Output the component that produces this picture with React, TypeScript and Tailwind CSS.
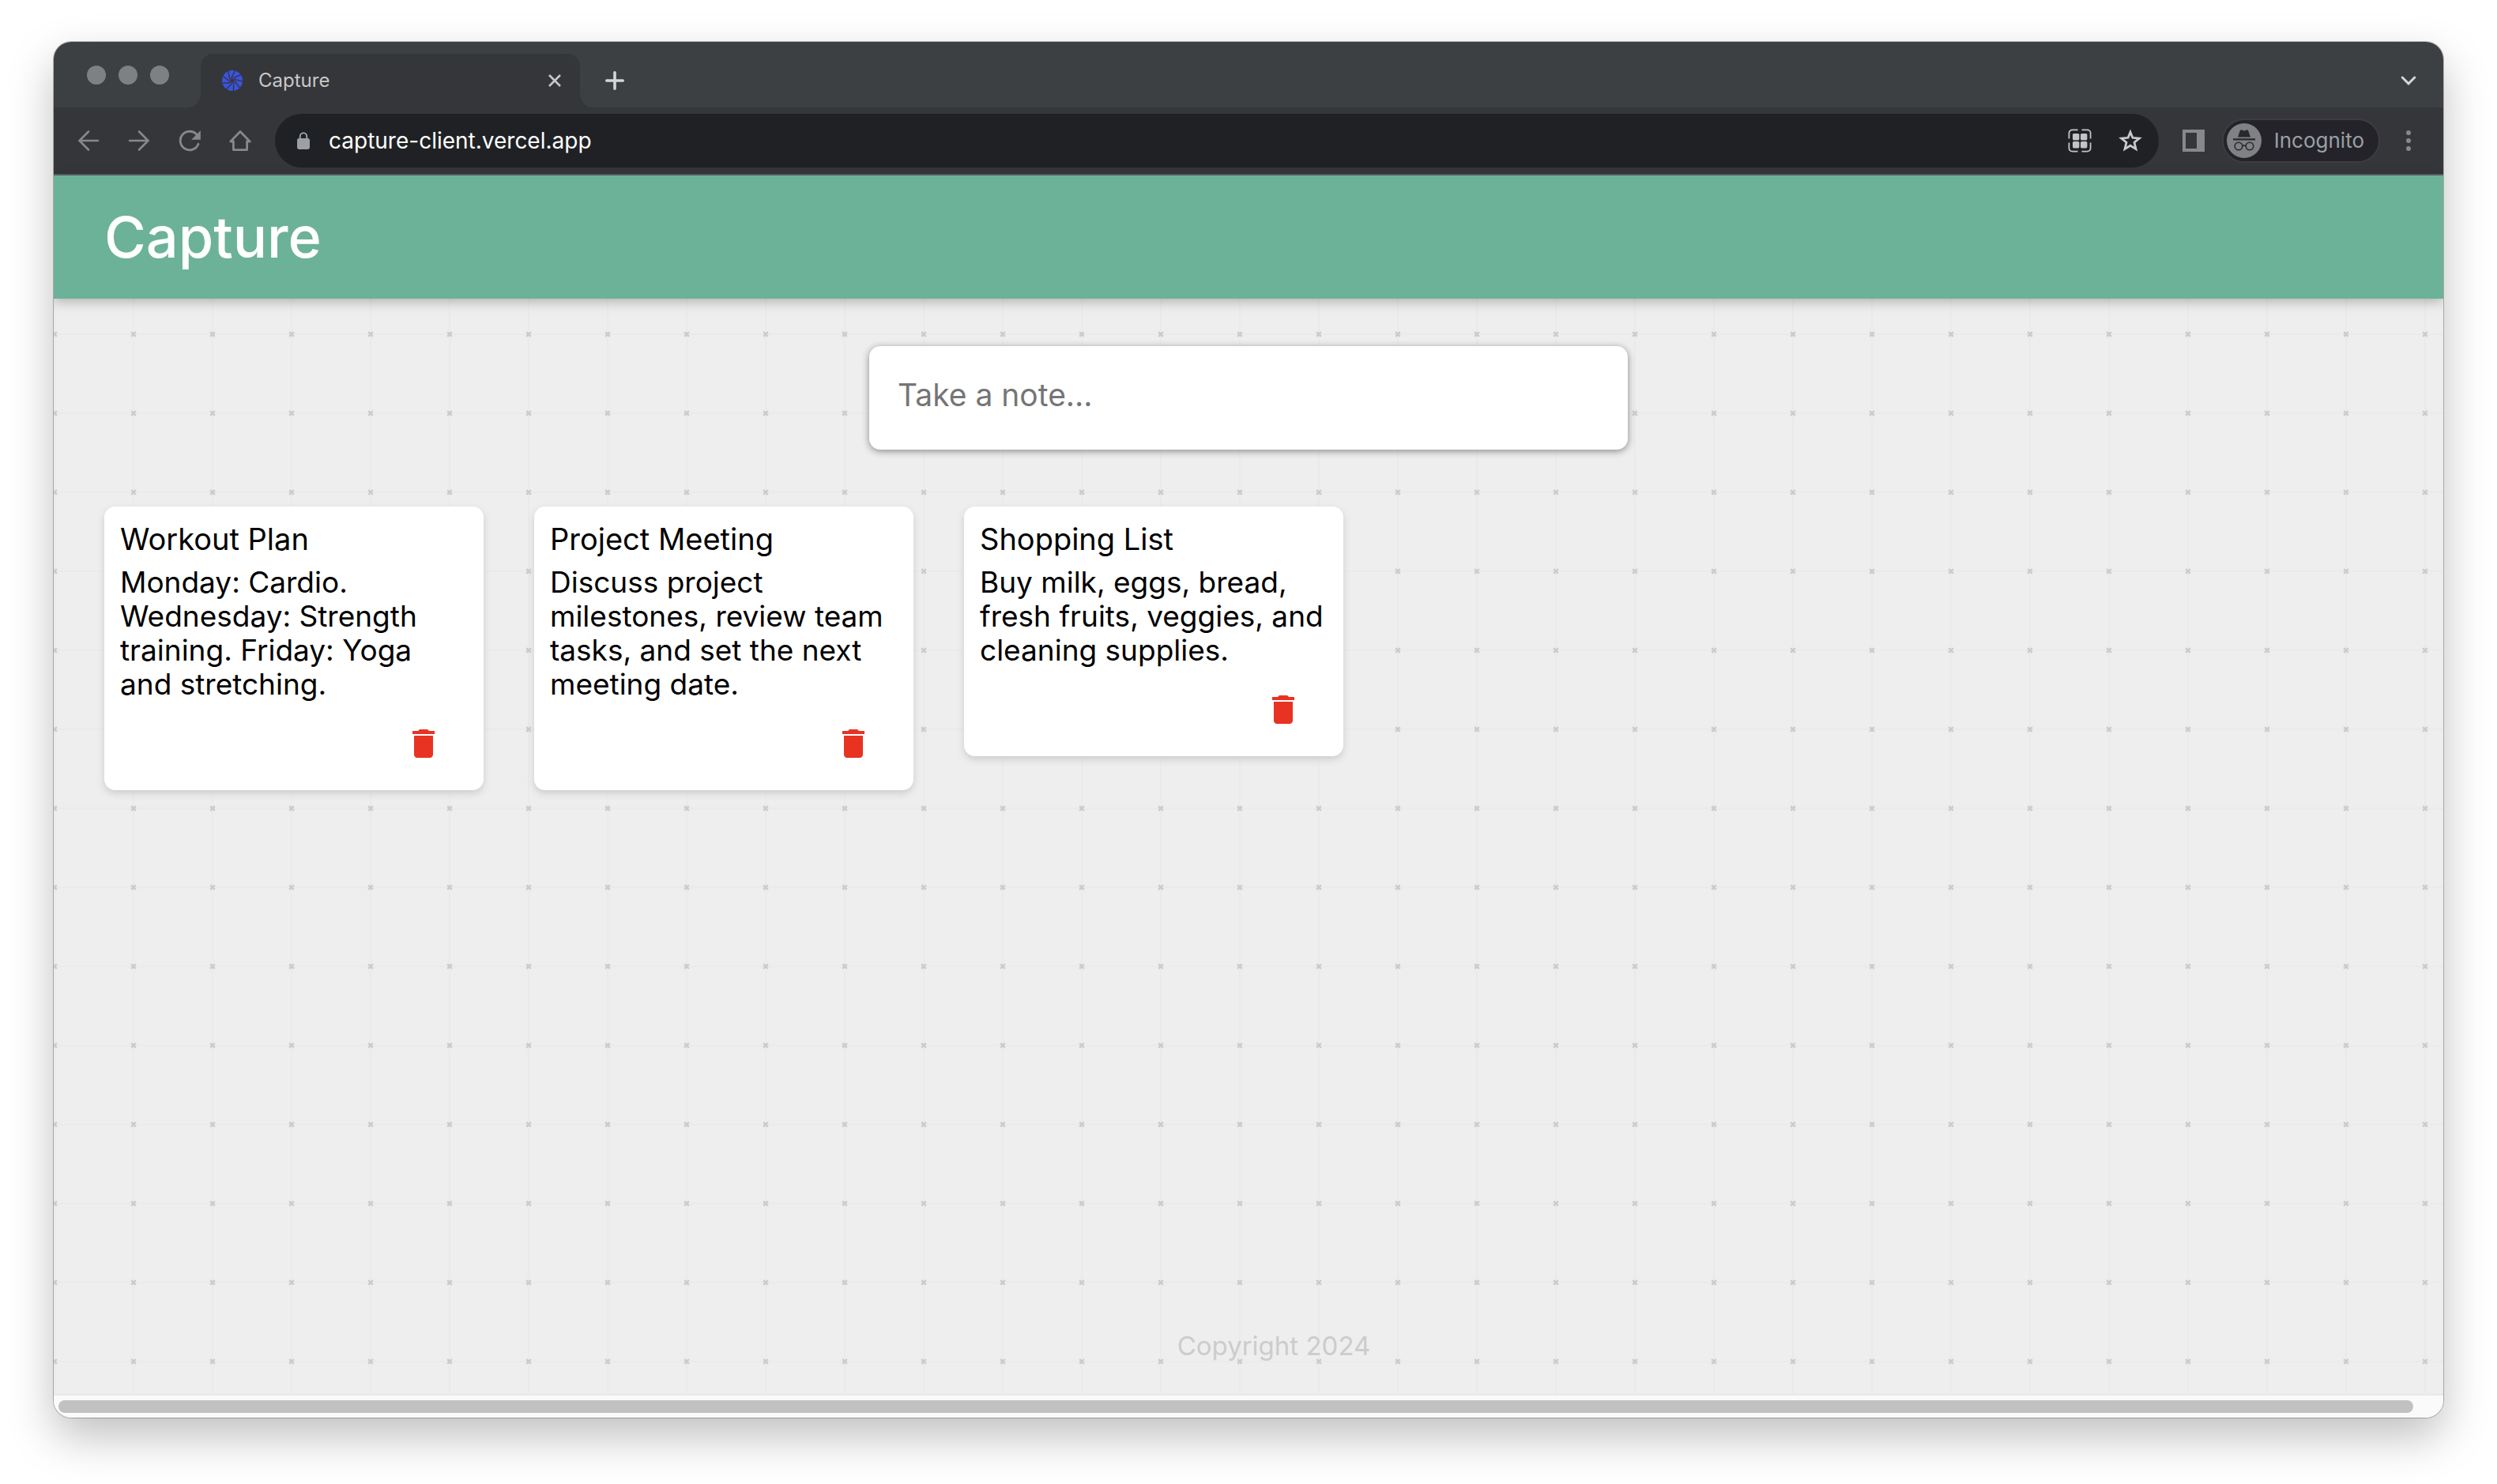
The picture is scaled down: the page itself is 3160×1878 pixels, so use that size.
import React from "react";

type Note = { title: string; content: string };

const notes: Note[] = [
  {
    title: "Workout Plan",
    content:
      "Monday: Cardio. Wednesday: Strength training. Friday: Yoga and stretching.",
  },
  {
    title: "Project Meeting",
    content:
      "Discuss project milestones, review team tasks, and set the next meeting date.",
  },
  {
    title: "Shopping List",
    content:
      "Buy milk, eggs, bread, fresh fruits, veggies, and cleaning supplies.",
  },
];

function IconButton({
  label,
  className,
  children,
}: {
  label: string;
  className: string;
  children: React.ReactNode;
}) {
  return (
    <button
      type="button"
      aria-label={label}
      className={`flex shrink-0 items-center justify-center ${className}`}
    >
      {children}
    </button>
  );
}

function Favicon() {
  const blades = [0, 40, 80, 120, 160, 200, 240, 280, 320];
  return (
    <svg viewBox="0 0 26 26" className="size-[26px] shrink-0" aria-hidden="true">
      <circle cx="13" cy="13" r="13" fill="#3b53e0" />
      {blades.map((a) => (
        <path
          key={a}
          d="M11.400 10.800 17 -1"
          stroke="#35363a"
          strokeWidth="1.3"
          transform={`rotate(${a} 13 13)`}
        />
      ))}
      <circle cx="13" cy="13" r="2.2" fill="#35363a" />
    </svg>
  );
}

function TabStrip() {
  return (
    <div className="flex h-[83px] items-center bg-[#3c4043]">
      <div className="flex gap-4 pl-[42px]">
        <span className="size-6 rounded-full bg-[#7f8081]" />
        <span className="size-6 rounded-full bg-[#7f8081]" />
        <span className="size-6 rounded-full bg-[#7f8081]" />
      </div>
      <div className="relative ml-10 flex h-[68px] w-[480px] items-center self-end rounded-t-2xl bg-[#35363a] pr-2 pl-[27px]">
        <span className="absolute bottom-0 -left-4 size-4 bg-[radial-gradient(circle_at_0_0,transparent_15px,#35363a_16px)]" />
        <span className="absolute -right-4 bottom-0 size-4 bg-[radial-gradient(circle_at_100%_0,transparent_15px,#35363a_16px)]" />
        <Favicon />
        <span className="ml-5 flex-1 text-[24px] leading-8 text-[#c7c8ca]">
          Capture
        </span>
        <IconButton label="Close tab" className="size-12">
          <svg viewBox="0 0 16 16" className="size-4" aria-hidden="true">
            <path d="M1 1 15 15M15 1 1 15" stroke="#c7c8ca" strokeWidth="2.6" />
          </svg>
        </IconButton>
      </div>
      <IconButton label="New tab" className="ml-3 h-[68px] w-16 self-end">
        <svg viewBox="0 0 24 24" className="size-6" aria-hidden="true">
          <path
            d="M12 1.8V22.2M1.8 12H22.2"
            stroke="#d5d6d7"
            strokeWidth="3.6"
            strokeLinecap="round"
          />
        </svg>
      </IconButton>
      <IconButton label="Search tabs" className="mr-3 ml-auto h-[68px] w-16 self-end">
        <svg viewBox="0 0 20 12" className="h-3 w-5" aria-hidden="true">
          <path
            d="M2.2 2 10 9.8 17.8 2"
            fill="none"
            stroke="#d5d6d7"
            strokeWidth="3"
            strokeLinecap="round"
          />
        </svg>
      </IconButton>
    </div>
  );
}

function Toolbar() {
  return (
    <div className="flex h-[86px] items-center border-b-2 border-[#5c5d61] bg-[#35363a] px-3">
      <IconButton label="Back" className="h-[68px] w-16">
        <svg viewBox="0 0 28 28" className="size-7" aria-hidden="true">
          <path
            d="M26 14H3M14 2.5 2.5 14 14 25.5"
            fill="none"
            stroke="#87888a"
            strokeWidth="2.6"
            strokeLinecap="round"
          />
        </svg>
      </IconButton>
      <IconButton label="Forward" className="h-[68px] w-16">
        <svg viewBox="0 0 28 28" className="size-7" aria-hidden="true">
          <path
            d="M2 14H25M14 2.5 25.5 14 14 25.5"
            fill="none"
            stroke="#87888a"
            strokeWidth="2.6"
            strokeLinecap="round"
          />
        </svg>
      </IconButton>
      <IconButton label="Reload" className="h-[68px] w-16">
        <svg viewBox="0 0 28 28" className="size-7" aria-hidden="true">
          <path
            d="M25 18.2A11.8 11.8 0 1 1 22.6 6"
            fill="none"
            stroke="#87888a"
            strokeWidth="2.8"
            strokeLinecap="round"
          />
          <path d="M27.8 1.2V12.8H16.2Z" fill="#87888a" />
        </svg>
      </IconButton>
      <IconButton label="Home" className="h-[68px] w-16">
        <svg viewBox="0 0 28 28" className="size-7" aria-hidden="true">
          <path
            d="M1.8 15 14 2.6 26.2 15H22.6V25.6H5.4V15Z"
            fill="none"
            stroke="#87888a"
            strokeWidth="2.8"
            strokeLinejoin="round"
          />
        </svg>
      </IconButton>

      <div className="ml-3 flex h-[68px] flex-1 items-center rounded-full bg-[#202124] pr-1 pl-6">
        <svg viewBox="0 0 24 24" className="size-6 shrink-0" aria-hidden="true">
          <rect x="4" y="9" width="16" height="14" rx="2.4" fill="#9aa0a6" />
          <path
            d="M7.8 10V6.4a4.2 4.2 0 0 1 8.4 0V10"
            fill="none"
            stroke="#9aa0a6"
            strokeWidth="2"
          />
        </svg>
        <input
          type="text"
          aria-label="Address"
          defaultValue="capture-client.vercel.app"
          className="ml-5 h-10 min-w-0 flex-1 bg-transparent text-[28px] leading-10 text-white outline-none"
        />
        <IconButton label="Create QR code" className="h-[68px] w-16">
          <svg viewBox="0 0 30 30" className="size-[30px]" aria-hidden="true">
            <g fill="none" stroke="#c3c4c6" strokeWidth="1.8">
              <path d="M12.5 1.400H5.400a4 4 0 0 0-4 4v7.100" />
              <path d="M17.500 1.400h7.100a4 4 0 0 1 4 4v7.100" />
              <path d="M12.5 28.600H5.400a4 4 0 0 1-4-4v-7.100" />
              <path d="M17.500 28.600h7.100a4 4 0 0 0 4-4v-7.100" />
            </g>
            <g fill="#c3c4c6">
              <rect x="6" y="6" width="8.4" height="8.4" rx="1.6" />
              <rect x="16" y="6" width="8.4" height="8.4" rx="1.6" />
              <rect x="6" y="16" width="8.4" height="8.4" rx="1.6" />
              <rect x="16" y="16" width="8.4" height="8.4" rx="1.6" />
            </g>
          </svg>
        </IconButton>
        <IconButton label="Bookmark this tab" className="h-[68px] w-16">
          <svg viewBox="0 0 30 30" className="size-[30px]" aria-hidden="true">
            <path
              d="M15 4.2 17.9 11.3 26.3 12 20 17.2 22 25.6 15 21.2 8 25.6 10 17.2 3.7 12 12.1 11.3Z"
              fill="none"
              stroke="#c9cacb"
              strokeWidth="2.8"
            />
          </svg>
        </IconButton>
      </div>

      <IconButton label="Side panel" className="ml-3 h-[68px] w-16">
        <svg viewBox="0 0 28 28" className="size-7" aria-hidden="true">
          <path d="M0 0H28V28H0ZM4 4V24H18V4Z" fill="#87888a" fillRule="evenodd" />
        </svg>
      </IconButton>
      <button
        type="button"
        className="ml-1 flex h-14 shrink-0 items-center gap-4 rounded-full border-2 border-[#3d3c42] bg-[#242329] pr-[18px] pl-1"
      >
        <svg viewBox="0 0 44 44" className="size-11" aria-hidden="true">
          <circle cx="22" cy="22" r="22" fill="#808184" />
          <path d="M8 19.2H36V21.4H8Z" fill="#28292c" />
          <path
            d="M14 17.6 17 8.8Q17.6 8 18.8 8.4L22 9.6 25.2 8.4Q26.4 8 27 8.8L30 17.6Z"
            fill="#28292c"
          />
          <g fill="none" stroke="#28292c" strokeWidth="1.6">
            <circle cx="15" cy="29" r="4.8" />
            <circle cx="29" cy="29" r="4.8" />
            <path d="M19.6 29Q22 27 24.4 29" />
          </g>
        </svg>
        <span className="text-[26px] leading-8 text-[#9aa0a6]">Incognito</span>
      </button>
      <IconButton label="Menu" className="ml-1 h-[68px] w-16">
        <svg viewBox="0 0 6 28" className="h-7 w-1.5" aria-hidden="true">
          <circle cx="3" cy="4" r="3" fill="#87888a" />
          <circle cx="3" cy="14" r="3" fill="#87888a" />
          <circle cx="3" cy="24" r="3" fill="#87888a" />
        </svg>
      </IconButton>
    </div>
  );
}

function DottedPaper() {
  return (
    <svg className="absolute inset-0 -z-10 size-full" aria-hidden="true">
      <defs>
        <pattern
          id="paper"
          x="-49"
          y="-5"
          width="100"
          height="100"
          patternUnits="userSpaceOnUse"
        >
          <path d="M50 0V100M0 50H100" stroke="#eaeaea" strokeWidth="2" />
          <path
            d="M47.2 47.2 52.8 52.8M52.8 47.2 47.2 52.8"
            stroke="#cbcbcb"
            strokeWidth="2.4"
          />
        </pattern>
      </defs>
      <rect width="100%" height="100%" fill="url(#paper)" />
    </svg>
  );
}

function NoteCard({ title, content }: Note) {
  return (
    <article className="w-[480px] rounded-[14px] bg-white px-5 pt-5 pb-[35px] text-black shadow-[0_4px_10px_#cccccc]">
      <h2 className="mb-[11px] text-[38px] leading-[43px]">{title}</h2>
      <p className="text-[37px] leading-[43px]">{content}</p>
      <button
        type="button"
        aria-label={`Delete ${title}`}
        className="mt-[30px] mr-8 ml-auto block text-[#e83323]"
      >
        <svg viewBox="0 0 24 24" fill="currentColor" className="size-12" aria-hidden="true">
          <path d="M6 19c0 1.1.9 2 2 2h8c1.1 0 2-.9 2-2V7H6v12zM19 4h-3.500l-1-1h-5l-1 1H5v2h14V4z" />
        </svg>
      </button>
    </article>
  );
}

export default function App() {
  return (
    <div className="flex min-h-screen flex-col bg-white px-[68px] pt-[53px] pb-[84px] font-['Inter',sans-serif]">
      <div className="flex flex-1 flex-col overflow-hidden rounded-[22px] shadow-[0_0_0_1px_rgba(0,0,0,0.25),0_24px_56px_rgba(0,0,0,0.25)]">
        <TabStrip />
        <Toolbar />
        <header className="relative z-10 flex h-[156px] items-center bg-[#6cb298] px-16 shadow-[0_4px_14px_rgba(0,0,0,0.25)]">
          <h1 className="text-[72px] leading-20 font-medium text-white">Capture</h1>
        </header>
        <div className="relative isolate flex flex-1 flex-col bg-[#eeeeee]">
          <DottedPaper />
          <main>
            <form className="mx-auto mt-[60px] w-[960px] rounded-[14px] bg-white px-5 pt-5 pb-7 shadow-[0_2px_10px_#8a8989]">
              <textarea
                rows={1}
                aria-label="Take a note"
                placeholder="Take a note..."
                className="block w-full resize-none overflow-hidden px-4 py-5 text-[39px] leading-[43px] outline-none placeholder:text-[#757575]"
              />
            </form>
            <section
              aria-label="Notes"
              className="mt-[72px] flex flex-wrap items-start gap-16 px-16"
            >
              {notes.map((note) => (
                <NoteCard key={note.title} {...note} />
              ))}
            </section>
          </main>
          <footer className="mt-auto pb-[41px] pl-16 text-center text-[33px] leading-10 text-[#cccccc]">
            Copyright 2024
          </footer>
        </div>
        <div className="flex h-[30px] items-center border-t-2 border-[#e8e8e8] bg-[#fafafa] pr-[38px] pl-1.5">
          <div className="h-4 flex-1 rounded-full bg-[#c1c1c1]" />
        </div>
      </div>
    </div>
  );
}
